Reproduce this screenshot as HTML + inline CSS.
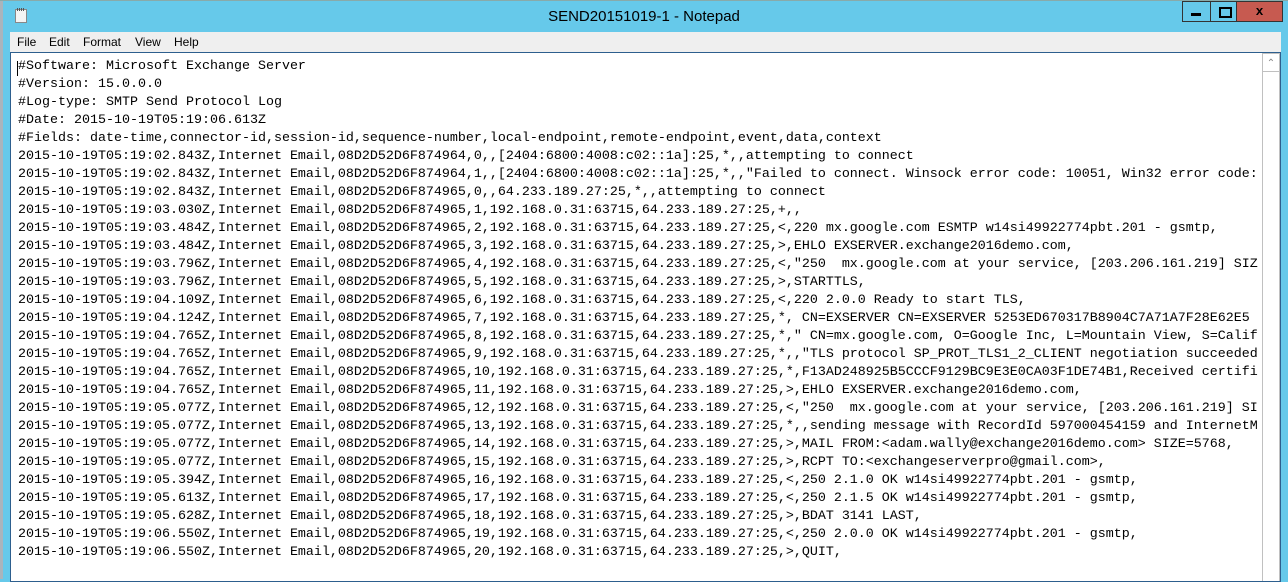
<!DOCTYPE html>
<html><head><meta charset="utf-8"><style>
body{margin:0;width:1288px;height:579px;overflow:hidden;background:#66c9ea;position:relative;font-family:"Liberation Sans",sans-serif}
.lstrip{position:absolute;left:0;top:0;width:3px;height:579px;background:#aab4bc}
.topline{position:absolute;left:0;top:0;width:1288px;height:1px;background:#8aa}
.icon{position:absolute;left:15px;top:9px;width:12px;height:14px;background:#f4f4f4;border:1px solid #888;box-sizing:border-box}
.icon:before{content:"";position:absolute;left:1px;top:-2px;width:8px;height:3px;background:repeating-linear-gradient(90deg,#555 0 1px,transparent 1px 2px)}
.title{position:absolute;left:0;width:1288px;top:8px;text-align:center;font-size:15px;color:#000}
.btn{position:absolute;top:1px;height:21px;border:1px solid #333;box-sizing:border-box}
.menu{position:absolute;left:10px;top:32px;width:1271px;height:20px;background:#efefef;font-size:12px}
.menu span{position:absolute;top:3px}
.edit{position:absolute;left:10px;top:52px;width:1271px;height:530px;background:#fff;border:1px solid #2d5f8e;box-sizing:border-box;overflow:hidden}
pre{margin:0;position:absolute;left:7px;top:5px;font-family:"Liberation Mono",monospace;font-size:13.33px;line-height:18px;color:#000;white-space:pre}
.sb{position:absolute;left:1251px;top:0px;width:18px;height:530px;border:1px solid #c0c0c0;box-sizing:border-box;background:#fff}
.sb div{position:absolute;left:0;top:0;width:16px;height:17px;border-bottom:1px solid #c0c0c0;color:#888;font-size:10px;text-align:center;line-height:20px}
.caret{position:absolute;left:6px;top:8px;width:1px;height:15px;background:#000}
</style></head><body>
<div class="lstrip"></div><div class="topline"></div>
<div class="icon"></div>
<div class="title">SEND20151019-1 - Notepad</div>
<div class="btn" style="left:1182px;width:29px;background:#66c9ea"><div style="position:absolute;left:8px;top:11px;width:10px;height:3px;background:#000"></div></div>
<div class="btn" style="left:1210px;width:27px;background:#66c9ea"><div style="position:absolute;left:8px;top:5px;width:9px;height:7px;border:2px solid #000"></div></div>
<div class="btn" style="left:1236px;width:47px;background:#c75a50;text-align:center;font-weight:bold;font-size:13px;line-height:19px;color:#000;font-family:'Liberation Mono',monospace">x</div>
<div class="menu"><span style="left:7px">File</span><span style="left:39px">Edit</span><span style="left:73px">Format</span><span style="left:125px">View</span><span style="left:164px">Help</span></div>
<div class="edit"><div class="caret"></div>
<pre>#Software: Microsoft Exchange Server
#Version: 15.0.0.0
#Log-type: SMTP Send Protocol Log
#Date: 2015-10-19T05:19:06.613Z
#Fields: date-time,connector-id,session-id,sequence-number,local-endpoint,remote-endpoint,event,data,context
2015-10-19T05:19:02.843Z,Internet Email,08D2D52D6F874964,0,,[2404:6800:4008:c02::1a]:25,*,,attempting to connect
2015-10-19T05:19:02.843Z,Internet Email,08D2D52D6F874964,1,,[2404:6800:4008:c02::1a]:25,*,,"Failed to connect. Winsock error code: 10051, Win32 error code: 
2015-10-19T05:19:02.843Z,Internet Email,08D2D52D6F874965,0,,64.233.189.27:25,*,,attempting to connect
2015-10-19T05:19:03.030Z,Internet Email,08D2D52D6F874965,1,192.168.0.31:63715,64.233.189.27:25,+,,
2015-10-19T05:19:03.484Z,Internet Email,08D2D52D6F874965,2,192.168.0.31:63715,64.233.189.27:25,&lt;,220 mx.google.com ESMTP w14si49922774pbt.201 - gsmtp,
2015-10-19T05:19:03.484Z,Internet Email,08D2D52D6F874965,3,192.168.0.31:63715,64.233.189.27:25,&gt;,EHLO EXSERVER.exchange2016demo.com,
2015-10-19T05:19:03.796Z,Internet Email,08D2D52D6F874965,4,192.168.0.31:63715,64.233.189.27:25,&lt;,"250  mx.google.com at your service, [203.206.161.219] SIZ
2015-10-19T05:19:03.796Z,Internet Email,08D2D52D6F874965,5,192.168.0.31:63715,64.233.189.27:25,&gt;,STARTTLS,
2015-10-19T05:19:04.109Z,Internet Email,08D2D52D6F874965,6,192.168.0.31:63715,64.233.189.27:25,&lt;,220 2.0.0 Ready to start TLS,
2015-10-19T05:19:04.124Z,Internet Email,08D2D52D6F874965,7,192.168.0.31:63715,64.233.189.27:25,*, CN=EXSERVER CN=EXSERVER 5253ED670317B8904C7A71A7F28E62E5 
2015-10-19T05:19:04.765Z,Internet Email,08D2D52D6F874965,8,192.168.0.31:63715,64.233.189.27:25,*," CN=mx.google.com, O=Google Inc, L=Mountain View, S=Calif
2015-10-19T05:19:04.765Z,Internet Email,08D2D52D6F874965,9,192.168.0.31:63715,64.233.189.27:25,*,,"TLS protocol SP_PROT_TLS1_2_CLIENT negotiation succeeded
2015-10-19T05:19:04.765Z,Internet Email,08D2D52D6F874965,10,192.168.0.31:63715,64.233.189.27:25,*,F13AD248925B5CCCF9129BC9E3E0CA03F1DE74B1,Received certifi
2015-10-19T05:19:04.765Z,Internet Email,08D2D52D6F874965,11,192.168.0.31:63715,64.233.189.27:25,&gt;,EHLO EXSERVER.exchange2016demo.com,
2015-10-19T05:19:05.077Z,Internet Email,08D2D52D6F874965,12,192.168.0.31:63715,64.233.189.27:25,&lt;,"250  mx.google.com at your service, [203.206.161.219] SI
2015-10-19T05:19:05.077Z,Internet Email,08D2D52D6F874965,13,192.168.0.31:63715,64.233.189.27:25,*,,sending message with RecordId 597000454159 and InternetM
2015-10-19T05:19:05.077Z,Internet Email,08D2D52D6F874965,14,192.168.0.31:63715,64.233.189.27:25,&gt;,MAIL FROM:&lt;adam.wally@exchange2016demo.com&gt; SIZE=5768,
2015-10-19T05:19:05.077Z,Internet Email,08D2D52D6F874965,15,192.168.0.31:63715,64.233.189.27:25,&gt;,RCPT TO:&lt;exchangeserverpro@gmail.com&gt;,
2015-10-19T05:19:05.394Z,Internet Email,08D2D52D6F874965,16,192.168.0.31:63715,64.233.189.27:25,&lt;,250 2.1.0 OK w14si49922774pbt.201 - gsmtp,
2015-10-19T05:19:05.613Z,Internet Email,08D2D52D6F874965,17,192.168.0.31:63715,64.233.189.27:25,&lt;,250 2.1.5 OK w14si49922774pbt.201 - gsmtp,
2015-10-19T05:19:05.628Z,Internet Email,08D2D52D6F874965,18,192.168.0.31:63715,64.233.189.27:25,&gt;,BDAT 3141 LAST,
2015-10-19T05:19:06.550Z,Internet Email,08D2D52D6F874965,19,192.168.0.31:63715,64.233.189.27:25,&lt;,250 2.0.0 OK w14si49922774pbt.201 - gsmtp,
2015-10-19T05:19:06.550Z,Internet Email,08D2D52D6F874965,20,192.168.0.31:63715,64.233.189.27:25,&gt;,QUIT,</pre>
<div class="sb"><div>&#8963;</div></div>
</div>
</body></html>
